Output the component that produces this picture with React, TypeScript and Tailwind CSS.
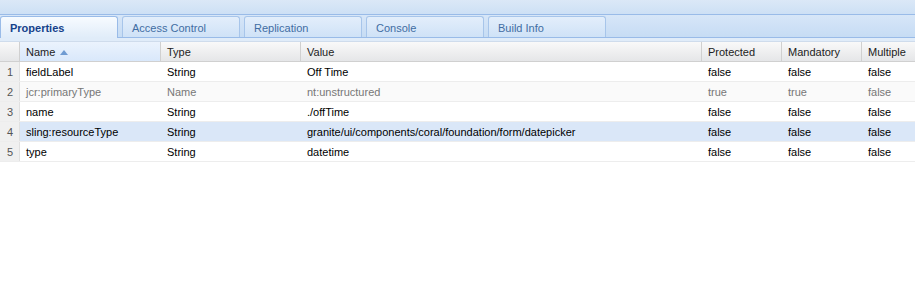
import React from 'react'

type Row = {
  name: string
  type: string
  value: string
  protected: string
  mandatory: string
  multiple: string
  muted?: boolean
  selected?: boolean
}

const rows: Row[] = [
  { name: 'fieldLabel', type: 'String', value: 'Off Time', protected: 'false', mandatory: 'false', multiple: 'false' },
  { name: 'jcr:primaryType', type: 'Name', value: 'nt:unstructured', protected: 'true', mandatory: 'true', multiple: 'false', muted: true },
  { name: 'name', type: 'String', value: './offTime', protected: 'false', mandatory: 'false', multiple: 'false' },
  { name: 'sling:resourceType', type: 'String', value: 'granite/ui/components/coral/foundation/form/datepicker', protected: 'false', mandatory: 'false', multiple: 'false', selected: true },
  { name: 'type', type: 'String', value: 'datetime', protected: 'false', mandatory: 'false', multiple: 'false' },
]

const tabs = ['Properties', 'Access Control', 'Replication', 'Console', 'Build Info']

const HeaderCell = ({ label, width, sorted }: { label: string, width: string, sorted?: boolean }) => (
  <div
    className={`${width} h-full flex items-center pl-[6px] pt-[2px] border-r border-[#d0d0d0] ${sorted ? 'bg-gradient-to-b from-[#ebf3fd] to-[#d9e8fb]' : ''}`}
  >
    <span>{label}</span>
    {sorted && (
      <svg width="8" height="5" viewBox="0 0 8 5" className="ml-[5px]">
        <path d="M0 5 L4 0 L8 5 Z" fill="#6f9bd2" />
      </svg>
    )}
  </div>
)

export default function App() {
  return (
    <div className="w-[915px] h-[281px] bg-white overflow-hidden font-['Liberation_Sans',Arial,sans-serif] text-[11px]">
      <div className="h-[15px] bg-gradient-to-b from-[#dbe8f7] to-[#cde0f5] border-b border-[#99bbe8]" />
      <div className="h-[23px] flex items-end gap-[4px] bg-gradient-to-b from-[#d7e6f8] to-[#c6dcf4] border-b border-[#99bbe8]">
        {tabs.map((tab, i) => (
          <div
            key={tab}
            className={
              i === 0
                ? 'w-[118px] h-[22px] -mb-px flex items-center pl-[9px] pt-[2px] rounded-t-[3px] border border-b-0 border-[#99bbe8] bg-gradient-to-b from-[#f7fbff] to-[#e0ecf9] font-bold text-[#15428b]'
                : 'w-[118px] h-[21px] flex items-center pl-[9px] pt-[2px] rounded-t-[3px] border border-b-0 border-[#a7c5ea] bg-gradient-to-b from-[#e3eefb] to-[#cfe2f7] text-[#416da3]'
            }
          >
            {tab}
          </div>
        ))}
      </div>
      <div className="h-[4px] bg-[#e0ecf9] border-b border-[#cfdcec]" />
      <div className="h-[20px] flex bg-gradient-to-b from-[#f9f9f9] to-[#e5e6e8] border-b border-[#d0d0d0] text-[#222]">
        <div className="w-[20px] h-full border-r border-[#d0d0d0]" />
        <HeaderCell label="Name" width="w-[141px]" sorted />
        <HeaderCell label="Type" width="w-[140px]" />
        <HeaderCell label="Value" width="w-[401px]" />
        <HeaderCell label="Protected" width="w-[80px]" />
        <HeaderCell label="Mandatory" width="w-[80px]" />
        <div className="flex-1 h-full flex items-center pl-[6px] pt-[2px]">Multiple</div>
      </div>
      {rows.map((row, i) => (
        <div
          key={row.name}
          className={`h-[20px] flex border-b border-[#ededed] ${row.selected ? 'bg-[#dae7f8]' : row.muted ? 'bg-[#fafafa]' : 'bg-white'} ${row.muted ? 'text-[#777]' : 'text-black'}`}
        >
          <div className="w-[20px] h-full flex items-center justify-end pr-[6px] pt-[2px] bg-[#f0f0f0] text-[#555] border-r border-[#e0e0e0]">
            {i + 1}
          </div>
          <div className="w-[141px] flex items-center pl-[6px] pt-[2px]">{row.name}</div>
          <div className="w-[140px] flex items-center pl-[6px] pt-[2px]">{row.type}</div>
          <div className="w-[401px] flex items-center pl-[6px] pt-[2px]">{row.value}</div>
          <div className="w-[80px] flex items-center pl-[6px] pt-[2px]">{row.protected}</div>
          <div className="w-[80px] flex items-center pl-[6px] pt-[2px]">{row.mandatory}</div>
          <div className="flex-1 flex items-center pl-[6px] pt-[2px]">{row.multiple}</div>
        </div>
      ))}
    </div>
  )
}
